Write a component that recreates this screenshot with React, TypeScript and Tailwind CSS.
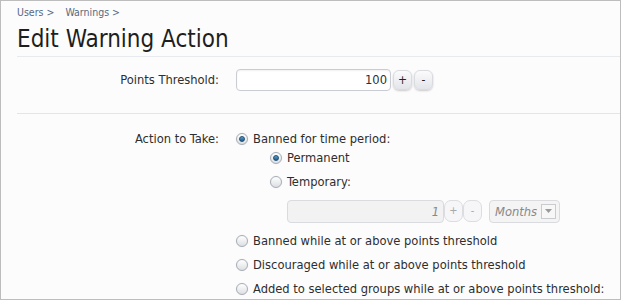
import React from "react";

const font = { fontFamily: '"DejaVu Sans Condensed", "DejaVu Sans", Tahoma, sans-serif' };

function Radio({ checked = false }: { checked?: boolean }) {
    return (
        <span className="flex h-[12px] w-[12px] shrink-0 items-center justify-center rounded-full border border-[#a7adb5] bg-gradient-to-b from-[#ffffff] to-[#dcdfe3] shadow-[0_0_1px_rgba(0,0,0,0.15)]">
            {checked && (
                <span className="h-[6px] w-[6px] rounded-full border border-[#1d4f73] bg-gradient-to-b from-[#5b9ccc] to-[#1f5c88]" />
            )}
        </span>
    );
}

function SpinButton({ label, disabled = false }: { label: string; disabled?: boolean }) {
    return (
        <button
            className={
                disabled
                    ? "flex h-[22px] w-[19px] items-center justify-center rounded-[7px] border border-[#dcdde1] bg-[#f6f6f8] text-[11px] text-[#a8a8a8]"
                    : "flex h-[20px] w-[19px] items-center justify-center rounded-[6px] border border-[#d9dbe0] bg-gradient-to-b from-[#fbfbfc] to-[#e3e5ea] text-[12px] text-[#222] shadow-[0_1px_2px_rgba(0,0,0,0.2)]"
            }
        >
            {label}
        </button>
    );
}

function Option({ label, checked, className = "h-6" }: { label: string; checked?: boolean; className?: string }) {
    return (
        <div className={`flex items-center gap-[5px] ${className}`}>
            <Radio checked={checked} />
            <span>{label}</span>
        </div>
    );
}

export default function App() {
    return (
        <div style={font} className="h-[300px] w-[621px] overflow-hidden border border-[#bdbdbd] bg-[#fcfcfd] text-[12.8px] text-[#2e2e2e]">
            <div className="pl-4">
                <div className="flex gap-[11px] pt-[4px] text-[10.5px] text-[#58697f]">
                    <span>Users &gt;</span>
                    <span>Warnings &gt;</span>
                </div>
                <h1 className="mt-[4px] text-[24px] leading-[28px] text-[#1e1e1e]">Edit Warning Action</h1>
                <div className="mt-[3px] h-px bg-[#e8ebee]" />

                <div className="flex items-center pt-3 pb-[22px]">
                    <div className="w-[203px] pr-[1px] text-right">Points Threshold:</div>
                    <div className="ml-4 flex items-center gap-[2px]">
                        <div className="flex h-[22px] w-[155px] items-center justify-end rounded-[4px] border border-[#c9cdd3] bg-white pr-[3px] shadow-[inset_0_1px_2px_rgba(0,0,0,0.06)]">
                            100
                        </div>
                        <SpinButton label="+" />
                        <SpinButton label="-" />
                    </div>
                </div>
                <div className="h-px bg-[#dce8ee]" />

                <div className="flex pt-[15px]">
                    <div className="flex h-5 w-[203px] items-center justify-end pr-[1px]">Action to Take:</div>
                    <div className="ml-4 flex flex-col">
                        <Option label="Banned for time period:" checked className="h-5" />
                        <div className="pl-[34px]">
                            <Option label="Permanent" checked className="h-[18px]" />
                            <Option label="Temporary:" className="mt-[3px] h-6" />
                            <div className="mt-[6px] mb-[6px] flex items-center pl-[17px]">
                                <div className="flex h-[23px] w-[157px] items-center justify-end rounded-[4px] border border-[#dadbdf] bg-[#f2f2f3] pr-[4px] italic text-[#888]">
                                    1
                                </div>
                                <SpinButton label="+" disabled />
                                <SpinButton label="-" disabled />
                                <div className="ml-[7px] flex h-[23px] w-[71px] items-center justify-between rounded-[4px] border border-[#dadbdf] bg-[#f4f4f5] pl-[5px] pr-[3px] italic text-[#888]">
                                    <span>Months</span>
                                    <span className="flex h-[15px] w-[15px] items-center justify-center border border-[#c9cbcf] bg-[#f7f7f8]">
                                        <svg width="7" height="4" viewBox="0 0 7 4"><path d="M0 0h7L3.5 4z" fill="#9a9a9a" /></svg>
                                    </span>
                                </div>
                            </div>
                        </div>
                        <Option label="Banned while at or above points threshold" />
                        <Option label="Discouraged while at or above points threshold" />
                        <Option label="Added to selected groups while at or above points threshold:" />
                    </div>
                </div>
            </div>
        </div>
    );
}
